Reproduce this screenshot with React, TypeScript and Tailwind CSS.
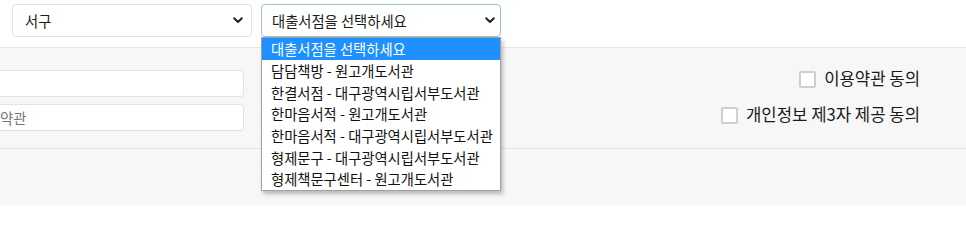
import React from "react";

const font = { fontFamily: '"Noto Sans CJK KR", "Noto Sans", sans-serif' };

function Chevron() {
  return (
    <svg width="10" height="7" viewBox="0 0 10 7" className="shrink-0">
      <polyline points="1.2,1.2 5,5 8.8,1.2" fill="none" stroke="#222" strokeWidth="2" strokeLinecap="round" strokeLinejoin="round" />
    </svg>
  );
}

const options = [
  "대출서점을 선택하세요",
  "담담책방 - 원고개도서관",
  "한결서점 - 대구광역시립서부도서관",
  "한마음서적 - 원고개도서관",
  "한마음서적 - 대구광역시립서부도서관",
  "형제문구 - 대구광역시립서부도서관",
  "형제책문구센터 - 원고개도서관",
];

export default function App() {
  return (
    <div className="relative w-[966px] h-[205px] overflow-hidden bg-[#f7f7f7] text-[#222]" style={font}>
      <div className="h-[48px] bg-white border-b border-[#e6e6e6] flex items-start pt-[4px] pl-[12px] gap-[9px]">
        <div className="w-[240px] h-[33px] border border-[#e2e2e2] rounded-[4px] bg-white flex items-center justify-between pl-[12px] pr-[8px] text-[14.3px] text-[#1a1a1a]">
          <span>서구</span>
          <Chevron />
        </div>
        <div className="w-[240px] h-[33px] border border-[#9cc3d0] rounded-[4px] bg-white flex items-center justify-between pl-[10px] pr-[5px] text-[14.3px] text-[#1a1a1a]">
          <span>대출서점을 선택하세요</span>
          <Chevron />
        </div>
      </div>
      <div className="h-[101px] border-b border-[#e3e3e3] flex justify-between">
        <div className="flex flex-col pt-[22px] gap-[7px]">
          <div className="w-[244px] h-[27px] bg-white border-y border-r border-[#e3e3e3] rounded-r-[4px]" />
          <div className="w-[244px] h-[27px] bg-white border-y border-r border-[#e3e3e3] rounded-r-[4px] flex items-center text-[14.3px] text-[#777]">
            <span>약관</span>
          </div>
        </div>
        <div className="flex flex-col items-end pt-[20px] gap-[14px] pr-[46px] text-[16.7px] text-[#1a1a1a]">
          <label className="h-[22px] flex items-center gap-[8px]">
            <span className="w-[17px] h-[17px] border-2 border-[#cfcfcf] rounded-[2px] bg-white" />
            <span>이용약관 동의</span>
          </label>
          <label className="h-[22px] flex items-center gap-[8px]">
            <span className="w-[17px] h-[17px] border-2 border-[#cfcfcf] rounded-[2px] bg-white" />
            <span>개인정보 제3자 제공 동의</span>
          </label>
        </div>
      </div>
      <div className="absolute left-[261px] top-[37px] w-[240px] bg-white border border-[#a0a0a0] shadow-[2px_3px_4px_rgba(0,0,0,0.25)] text-[14.3px]">
        {options.map((o, i) => (
          <div
            key={o}
            className={
              i === 0
                ? "h-[21.7px] flex items-center pl-[9px] bg-[#1e90ff] text-white"
                : "h-[21.7px] flex items-center pl-[9px] text-[#111]"
            }
          >
            {o}
          </div>
        ))}
      </div>
    </div>
  );
}
